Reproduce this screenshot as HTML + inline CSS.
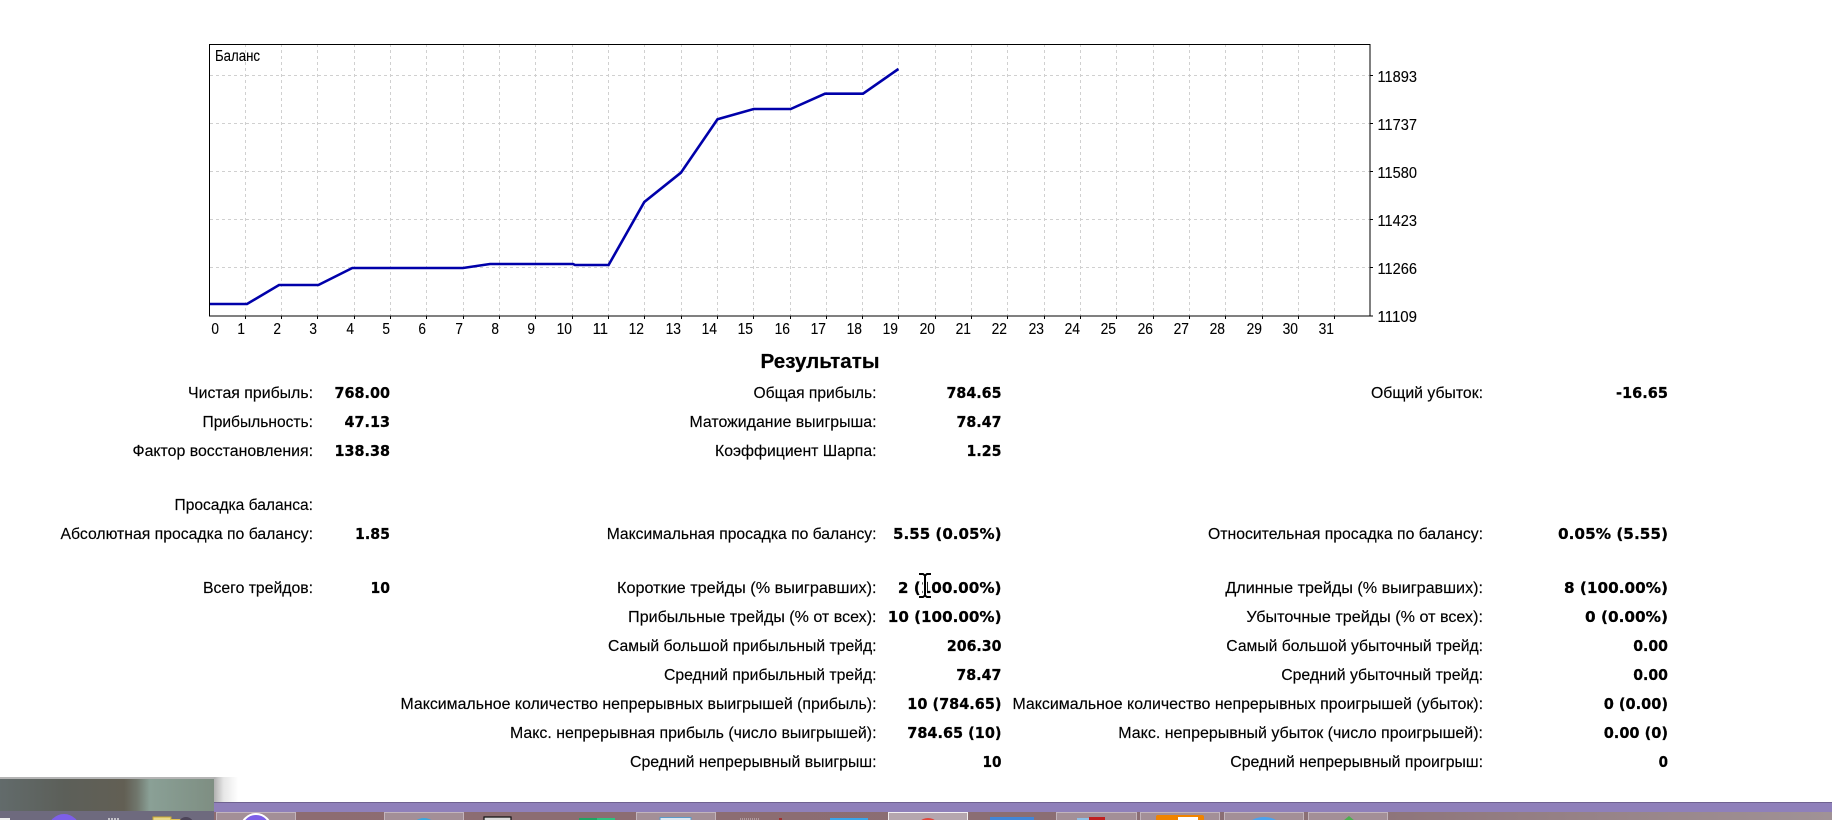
<!DOCTYPE html>
<html lang="ru"><head><meta charset="utf-8"><title>Результаты</title>
<style>
html,body{margin:0;padding:0;background:#fff;width:1832px;height:820px;overflow:hidden}
svg{display:block}
text{font-family:"Liberation Sans",sans-serif;fill:#000}
.a{font-size:15.5px;stroke:#000;stroke-width:.12}
.l{font-size:16px;text-anchor:end;stroke:#000;stroke-width:.15}
.v{font-family:"DejaVu Sans",sans-serif;font-size:15.5px;font-weight:bold;text-anchor:end;stroke:#000;stroke-width:.25}
.x{font-size:15.5px;text-anchor:end;stroke:#000;stroke-width:.12}
</style></head><body>
<svg width="1832" height="820" viewBox="0 0 1832 820" xmlns="http://www.w3.org/2000/svg">
<defs>
<linearGradient id="ph" x1="0" x2="1" y1="0" y2="0">
<stop offset="0" stop-color="#626b6b"/><stop offset=".3" stop-color="#5c5f59"/><stop offset=".58" stop-color="#625f54"/><stop offset=".64" stop-color="#70766c"/><stop offset=".7" stop-color="#8aa096"/><stop offset="1" stop-color="#7e8e82"/>
</linearGradient>
<linearGradient id="sh" x1="0" x2="1" y1="0" y2="0"><stop offset="0" stop-color="#b0b0b0"/><stop offset=".4" stop-color="#e6e6e6"/><stop offset="1" stop-color="#fff"/></linearGradient>
<linearGradient id="tb" x1="0" x2="1" y1="0" y2="0"><stop offset="0" stop-color="#8e6c70"/><stop offset=".7" stop-color="#8a6e74"/><stop offset="1" stop-color="#a09296"/></linearGradient>
</defs>
<rect width="1832" height="820" fill="#fff"/>

<g stroke="#d0d0d0" stroke-width="1" stroke-dasharray="3 3" fill="none" shape-rendering="crispEdges">
<path d="M210 75.5H1370M210 123.5H1370M210 171.5H1370M210 219.5H1370M210 267.5H1370"/>
<path d="M245.5 44V316M281.5 44V316M317.5 44V316M354.5 44V316M390.5 44V316M426.5 44V316M463.5 44V316M499.5 44V316M535.5 44V316M572.5 44V316M608.5 44V316M644.5 44V316M681.5 44V316M717.5 44V316M753.5 44V316M790.5 44V316M826.5 44V316M862.5 44V316M898.5 44V316M935.5 44V316M971.5 44V316M1007.5 44V316M1044.5 44V316M1080.5 44V316M1116.5 44V316M1153.5 44V316M1189.5 44V316M1225.5 44V316M1262.5 44V316M1298.5 44V316M1334.5 44V316"/>
</g>
<rect x="209.5" y="44.5" width="1160.5" height="271.5" fill="none" stroke="#000" stroke-width="1" shape-rendering="crispEdges"/>
<path stroke="#000" stroke-width="1" fill="none" shape-rendering="crispEdges" d="M1370 75.5h3M1370 123.5h3M1370 171.5h3M1370 219.5h3M1370 267.5h3M1370 316h3M245.5 316v3M281.5 316v3M317.5 316v3M354.5 316v3M390.5 316v3M426.5 316v3M463.5 316v3M499.5 316v3M535.5 316v3M572.5 316v3M608.5 316v3M644.5 316v3M681.5 316v3M717.5 316v3M753.5 316v3M790.5 316v3M826.5 316v3M862.5 316v3M898.5 316v3M935.5 316v3M971.5 316v3M1007.5 316v3M1044.5 316v3M1080.5 316v3M1116.5 316v3M1153.5 316v3M1189.5 316v3M1225.5 316v3M1262.5 316v3M1298.5 316v3M1334.5 316v3"/>
<polyline fill="none" stroke="#0000aa" stroke-width="2.6" points="210,304 247,304 279,285 318.4,285 352.3,268 463,268 490,264 573,264 575,265 608.6,265 644.3,202 680.9,172.7 717.5,119.3 753.7,109 790.7,109 825,93.7 863,93.7 898.4,69"/>

<text class="a" x="215" y="61" textLength="45" lengthAdjust="spacingAndGlyphs">Баланс</text>
<text x="1377.5" y="82" class="a" textLength="39.5" lengthAdjust="spacingAndGlyphs">11893</text>
<text x="1377.5" y="130" class="a" textLength="39.5" lengthAdjust="spacingAndGlyphs">11737</text>
<text x="1377.5" y="178" class="a" textLength="39.5" lengthAdjust="spacingAndGlyphs">11580</text>
<text x="1377.5" y="226" class="a" textLength="39.5" lengthAdjust="spacingAndGlyphs">11423</text>
<text x="1377.5" y="274" class="a" textLength="39.5" lengthAdjust="spacingAndGlyphs">11266</text>
<text x="1377.5" y="322" class="a" textLength="39.5" lengthAdjust="spacingAndGlyphs">11109</text>
<text class="x" x="219" y="334" textLength="7.6" lengthAdjust="spacingAndGlyphs">0</text>
<text class="x" x="245" y="334" textLength="7.6" lengthAdjust="spacingAndGlyphs">1</text>
<text class="x" x="281" y="334" textLength="7.6" lengthAdjust="spacingAndGlyphs">2</text>
<text class="x" x="317" y="334" textLength="7.6" lengthAdjust="spacingAndGlyphs">3</text>
<text class="x" x="354" y="334" textLength="7.6" lengthAdjust="spacingAndGlyphs">4</text>
<text class="x" x="390" y="334" textLength="7.6" lengthAdjust="spacingAndGlyphs">5</text>
<text class="x" x="426" y="334" textLength="7.6" lengthAdjust="spacingAndGlyphs">6</text>
<text class="x" x="463" y="334" textLength="7.6" lengthAdjust="spacingAndGlyphs">7</text>
<text class="x" x="499" y="334" textLength="7.6" lengthAdjust="spacingAndGlyphs">8</text>
<text class="x" x="535" y="334" textLength="7.6" lengthAdjust="spacingAndGlyphs">9</text>
<text class="x" x="572" y="334" textLength="15.4" lengthAdjust="spacingAndGlyphs">10</text>
<text class="x" x="608" y="334" textLength="15.4" lengthAdjust="spacingAndGlyphs">11</text>
<text class="x" x="644" y="334" textLength="15.4" lengthAdjust="spacingAndGlyphs">12</text>
<text class="x" x="681" y="334" textLength="15.4" lengthAdjust="spacingAndGlyphs">13</text>
<text class="x" x="717" y="334" textLength="15.4" lengthAdjust="spacingAndGlyphs">14</text>
<text class="x" x="753" y="334" textLength="15.4" lengthAdjust="spacingAndGlyphs">15</text>
<text class="x" x="790" y="334" textLength="15.4" lengthAdjust="spacingAndGlyphs">16</text>
<text class="x" x="826" y="334" textLength="15.4" lengthAdjust="spacingAndGlyphs">17</text>
<text class="x" x="862" y="334" textLength="15.4" lengthAdjust="spacingAndGlyphs">18</text>
<text class="x" x="898" y="334" textLength="15.4" lengthAdjust="spacingAndGlyphs">19</text>
<text class="x" x="935" y="334" textLength="15.4" lengthAdjust="spacingAndGlyphs">20</text>
<text class="x" x="971" y="334" textLength="15.4" lengthAdjust="spacingAndGlyphs">21</text>
<text class="x" x="1007" y="334" textLength="15.4" lengthAdjust="spacingAndGlyphs">22</text>
<text class="x" x="1044" y="334" textLength="15.4" lengthAdjust="spacingAndGlyphs">23</text>
<text class="x" x="1080" y="334" textLength="15.4" lengthAdjust="spacingAndGlyphs">24</text>
<text class="x" x="1116" y="334" textLength="15.4" lengthAdjust="spacingAndGlyphs">25</text>
<text class="x" x="1153" y="334" textLength="15.4" lengthAdjust="spacingAndGlyphs">26</text>
<text class="x" x="1189" y="334" textLength="15.4" lengthAdjust="spacingAndGlyphs">27</text>
<text class="x" x="1225" y="334" textLength="15.4" lengthAdjust="spacingAndGlyphs">28</text>
<text class="x" x="1262" y="334" textLength="15.4" lengthAdjust="spacingAndGlyphs">29</text>
<text class="x" x="1298" y="334" textLength="15.4" lengthAdjust="spacingAndGlyphs">30</text>
<text class="x" x="1334" y="334" textLength="15.4" lengthAdjust="spacingAndGlyphs">31</text>

<text x="760.5" y="368" font-size="20.5" font-weight="bold" stroke="#000" stroke-width=".2" textLength="119" lengthAdjust="spacingAndGlyphs">Результаты</text>

<g transform="translate(-0.5,-1)">
<!-- column 1 -->
<text class="l" x="313.5" y="399" textLength="125" lengthAdjust="spacingAndGlyphs">Чистая прибыль:</text>
<text class="l" x="313.5" y="428" textLength="110.5" lengthAdjust="spacingAndGlyphs">Прибыльность:</text>
<text class="l" x="313.5" y="457" textLength="180.5" lengthAdjust="spacingAndGlyphs">Фактор восстановления:</text>
<text class="l" x="313.5" y="511" textLength="138.5" lengthAdjust="spacingAndGlyphs">Просадка баланса:</text>
<text class="l" x="313.5" y="540" textLength="252.5" lengthAdjust="spacingAndGlyphs">Абсолютная просадка по балансу:</text>
<text class="l" x="313.5" y="594" textLength="110" lengthAdjust="spacingAndGlyphs">Всего трейдов:</text>
<text class="v" x="390.5" y="399" textLength="55.5" lengthAdjust="spacingAndGlyphs">768.00</text>
<text class="v" x="390.5" y="428" textLength="45.5" lengthAdjust="spacingAndGlyphs">47.13</text>
<text class="v" x="390.5" y="457" textLength="55.5" lengthAdjust="spacingAndGlyphs">138.38</text>
<text class="v" x="390.5" y="540" textLength="35" lengthAdjust="spacingAndGlyphs">1.85</text>
<text class="v" x="390.5" y="594" textLength="19.5" lengthAdjust="spacingAndGlyphs">10</text>

<!-- column 2 -->
<text class="l" x="877" y="399" textLength="123" lengthAdjust="spacingAndGlyphs">Общая прибыль:</text>
<text class="l" x="877" y="428" textLength="187" lengthAdjust="spacingAndGlyphs">Матожидание выигрыша:</text>
<text class="l" x="877" y="457" textLength="161.5" lengthAdjust="spacingAndGlyphs">Коэффициент Шарпа:</text>
<text class="l" x="877" y="540" textLength="269.8" lengthAdjust="spacingAndGlyphs">Максимальная просадка по балансу:</text>
<text class="l" x="877" y="594" textLength="259.5" lengthAdjust="spacingAndGlyphs">Короткие трейды (% выигравших):</text>
<text class="l" x="877" y="623" textLength="248.3" lengthAdjust="spacingAndGlyphs">Прибыльные трейды (% от всех):</text>
<text class="l" x="877" y="652" textLength="268.5" lengthAdjust="spacingAndGlyphs">Самый большой прибыльный трейд:</text>
<text class="l" x="877" y="681" textLength="212.5" lengthAdjust="spacingAndGlyphs">Средний прибыльный трейд:</text>
<text class="l" x="877" y="710" textLength="476" lengthAdjust="spacingAndGlyphs">Максимальное количество непрерывных выигрышей (прибыль):</text>
<text class="l" x="877" y="739" textLength="366.5" lengthAdjust="spacingAndGlyphs">Макс. непрерывная прибыль (число выигрышей):</text>
<text class="l" x="877" y="768" textLength="246.5" lengthAdjust="spacingAndGlyphs">Средний непрерывный выигрыш:</text>
<text class="v" x="1002" y="399" textLength="55" lengthAdjust="spacingAndGlyphs">784.65</text>
<text class="v" x="1002" y="428" textLength="45" lengthAdjust="spacingAndGlyphs">78.47</text>
<text class="v" x="1002" y="457" textLength="35" lengthAdjust="spacingAndGlyphs">1.25</text>
<text class="v" x="1002" y="540" textLength="108.5" lengthAdjust="spacingAndGlyphs">5.55 (0.05%)</text>
<text class="v" x="1002" y="594" textLength="103.6" lengthAdjust="spacingAndGlyphs">2 (100.00%)</text>
<text class="v" x="1002" y="623" textLength="113.7" lengthAdjust="spacingAndGlyphs">10 (100.00%)</text>
<text class="v" x="1002" y="652" textLength="54.6" lengthAdjust="spacingAndGlyphs">206.30</text>
<text class="v" x="1002" y="681" textLength="45.2" lengthAdjust="spacingAndGlyphs">78.47</text>
<text class="v" x="1002" y="710" textLength="94.2" lengthAdjust="spacingAndGlyphs">10 (784.65)</text>
<text class="v" x="1002" y="739" textLength="94.2" lengthAdjust="spacingAndGlyphs">784.65 (10)</text>
<text class="v" x="1002" y="768" textLength="19" lengthAdjust="spacingAndGlyphs">10</text>

<!-- column 3 -->
<text class="l" x="1483.5" y="399" textLength="112" lengthAdjust="spacingAndGlyphs">Общий убыток:</text>
<text class="l" x="1483.5" y="540" textLength="275" lengthAdjust="spacingAndGlyphs">Относительная просадка по балансу:</text>
<text class="l" x="1483.5" y="594" textLength="257.6" lengthAdjust="spacingAndGlyphs">Длинные трейды (% выигравших):</text>
<text class="l" x="1483.5" y="623" textLength="236.6" lengthAdjust="spacingAndGlyphs">Убыточные трейды (% от всех):</text>
<text class="l" x="1483.5" y="652" textLength="256.7" lengthAdjust="spacingAndGlyphs">Самый большой убыточный трейд:</text>
<text class="l" x="1483.5" y="681" textLength="201.8" lengthAdjust="spacingAndGlyphs">Средний убыточный трейд:</text>
<text class="l" x="1483.5" y="710" textLength="470.5" lengthAdjust="spacingAndGlyphs">Максимальное количество непрерывных проигрышей (убыток):</text>
<text class="l" x="1483.5" y="739" textLength="364.7" lengthAdjust="spacingAndGlyphs">Макс. непрерывный убыток (число проигрышей):</text>
<text class="l" x="1483.5" y="768" textLength="252.7" lengthAdjust="spacingAndGlyphs">Средний непрерывный проигрыш:</text>
<text class="v" x="1668.5" y="399" textLength="52" lengthAdjust="spacingAndGlyphs">-16.65</text>
<text class="v" x="1668.5" y="540" textLength="110" lengthAdjust="spacingAndGlyphs">0.05% (5.55)</text>
<text class="v" x="1668.5" y="594" textLength="104" lengthAdjust="spacingAndGlyphs">8 (100.00%)</text>
<text class="v" x="1668.5" y="623" textLength="83" lengthAdjust="spacingAndGlyphs">0 (0.00%)</text>
<text class="v" x="1668.5" y="652" textLength="34.8" lengthAdjust="spacingAndGlyphs">0.00</text>
<text class="v" x="1668.5" y="681" textLength="34.8" lengthAdjust="spacingAndGlyphs">0.00</text>
<text class="v" x="1668.5" y="710" textLength="64.3" lengthAdjust="spacingAndGlyphs">0 (0.00)</text>
<text class="v" x="1668.5" y="739" textLength="64.3" lengthAdjust="spacingAndGlyphs">0.00 (0)</text>
<text class="v" x="1668.5" y="768" textLength="9.4" lengthAdjust="spacingAndGlyphs">0</text>
</g>

<!-- I-beam cursor -->
<path d="M919 574h4l2 1.5 2-1.5h4M925 575.5v20M919 597h4l2-1.5 2 1.5h4" fill="none" stroke="#fff" stroke-width="4"/>
<path d="M919 574h4l2 1.5 2-1.5h4M925 575.5v20M919 597h4l2-1.5 2 1.5h4" fill="none" stroke="#000" stroke-width="2"/>

<!-- taskbar -->
<rect x="0" y="802" width="1832" height="18" fill="url(#tb)"/>
<rect x="0" y="802" width="1832" height="10" fill="#8f80ba"/>
<rect x="0" y="802" width="1832" height="1" fill="#6f6290"/>
<rect x="214" y="777" width="24" height="25" fill="url(#sh)"/>
<g fill="#a38f97" stroke="#c2b4bc" stroke-width="1">
<rect x="216.5" y="812.5" width="79" height="9"/>
<rect x="384.5" y="812.5" width="79" height="9"/>
<rect x="636.5" y="812.5" width="79" height="9"/>
<rect x="1056.5" y="812.5" width="80" height="9"/>
<rect x="1140.5" y="812.5" width="79" height="9"/>
<rect x="1224.5" y="812.5" width="79" height="9"/>
<rect x="1308.5" y="812.5" width="79" height="9"/>
</g>
<rect x="888.5" y="812.5" width="79" height="9" fill="#b5a6ae" stroke="#f2eef0"/>
<!-- left block -->
<rect x="0" y="777" width="214" height="43" fill="#6e6a7e"/>
<rect x="0" y="779" width="214" height="32" fill="url(#ph)"/>
<rect x="0" y="777" width="214" height="2" fill="#b4b4b4"/>
<!-- taskbar icons -->
<circle cx="64" cy="830" r="16" fill="#7d5fe8"/>
<rect x="0" y="818" width="10" height="3" fill="#eee"/>
<path d="M109 818v3M112 818v3M115 818v3M118 818v3" stroke="#e0e0e0" stroke-width="1.5"/>
<rect x="153" y="817" width="18" height="4" fill="#e8d88a" stroke="#c8a830"/>
<rect x="171" y="819" width="20" height="2" fill="#e0c050"/>
<circle cx="186" cy="825" r="8" fill="#4c4458"/>
<circle cx="256" cy="829" r="15" fill="#7d5fe8" stroke="#fff" stroke-width="2"/>
<circle cx="424" cy="832" r="14" fill="#39a7e0"/>
<path d="M484 817h27v4h-27z" fill="#ddd" stroke="#111" stroke-width="1.2"/>
<rect x="579" y="818" width="18" height="3" fill="#1fa463"/>
<rect x="597" y="818" width="18" height="3" fill="#2fc27f"/>
<rect x="660" y="817.5" width="31" height="4" fill="#dfeaf2" stroke="#5b9bc8"/>
<path d="M740 819h20" stroke="#cfc6ca" stroke-dasharray="1 1"/>
<rect x="779" y="818" width="3" height="3" fill="#a03030"/>
<rect x="830" y="818" width="38" height="3" fill="#3aa5ea"/>
<circle cx="928" cy="830" r="12" fill="#e0463c"/>
<rect x="990" y="817" width="44" height="4" fill="#4186d8"/>
<rect x="1077" y="818" width="12" height="3" fill="#8fbfe6"/>
<rect x="1089" y="817" width="16" height="4" fill="#c02020"/>
<rect x="1156" y="815" width="48" height="6" rx="2" fill="#f08400"/>
<rect x="1178" y="817" width="20" height="4" fill="#fff"/>
<ellipse cx="1264" cy="829" rx="18" ry="12" fill="#4aa3f0"/>
<path d="M1349 816l6 5h-12z" fill="#4caf50"/>
</svg>
</body></html>
